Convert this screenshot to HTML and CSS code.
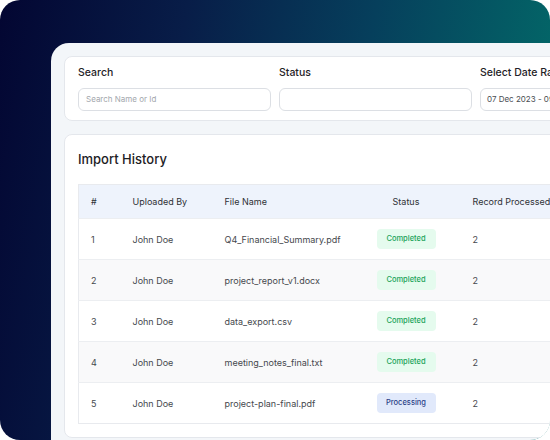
FILE: index.html
```html
<!DOCTYPE html>
<html lang="en">
<head>
<meta charset="utf-8">
<title>Import History</title>
<link rel="stylesheet" href="styles.css">
</head>
<body>
<div class="frame">
  <div class="panel">
    <div class="card filters">
      <div class="field">
        <label class="label">Search</label>
        <div class="input placeholder">Search Name or Id</div>
      </div>
      <div class="field">
        <label class="label">Status</label>
        <div class="input"></div>
      </div>
      <div class="field">
        <label class="label">Select Date Range</label>
        <div class="input value">07 Dec 2023 - 09 Dec 2023</div>
      </div>
    </div>
    <div class="card history">
      <h2 class="title">Import History</h2>
      <table class="table">
        <colgroup>
          <col class="c1"><col class="c2"><col class="c3"><col class="c4"><col class="c5"><col class="c6">
        </colgroup>
        <thead>
          <tr><th>#</th><th>Uploaded By</th><th>File Name</th><th class="center">Status</th><th class="num">Record Processed</th><th>Date</th></tr>
        </thead>
        <tbody>
          <tr><td>1</td><td>John Doe</td><td>Q4_Financial_Summary.pdf</td><td class="center"><span class="badge done">Completed</span></td><td class="num">2</td><td>07 Dec 2023</td></tr>
          <tr><td>2</td><td>John Doe</td><td>project_report_v1.docx</td><td class="center"><span class="badge done">Completed</span></td><td class="num">2</td><td>07 Dec 2023</td></tr>
          <tr><td>3</td><td>John Doe</td><td>data_export.csv</td><td class="center"><span class="badge done">Completed</span></td><td class="num">2</td><td>08 Dec 2023</td></tr>
          <tr><td>4</td><td>John Doe</td><td>meeting_notes_final.txt</td><td class="center"><span class="badge done">Completed</span></td><td class="num">2</td><td>08 Dec 2023</td></tr>
          <tr><td>5</td><td>John Doe</td><td>project-plan-final.pdf</td><td class="center"><span class="badge proc">Processing</span></td><td class="num">2</td><td>09 Dec 2023</td></tr>
        </tbody>
      </table>
    </div>
  </div>
</div>
</body>
</html>
```
FILE: styles.css
```css
html, body {
  margin: 0;
  padding: 0;
  background: #ffffff;
  overflow: hidden;
}
body {
  font-family: Inter, "Noto Sans", "Liberation Sans", sans-serif;
}
.frame {
  width: 550px;
  height: 440px;
  border-radius: 20px;
  overflow: hidden;
  background: linear-gradient(100deg, #030632 0%, #081d48 30%, #063f5c 60%, #02726b 100%);
  padding: 43px 0 0 51px;
  box-sizing: border-box;
}
.panel {
  width: 640px;
  height: 420px;
  background: #f3f6f9;
  border-radius: 18px 0 0 0;
  padding: 13px;
  box-sizing: border-box;
  display: flex;
  flex-direction: column;
  gap: 13px;
}
.card {
  background: #ffffff;
  border: 1px solid #e4e7ec;
  border-radius: 8px;
}
.filters {
  display: grid;
  grid-template-columns: 193px 193px 193px;
  column-gap: 8px;
  padding: 9px 14px 9px 13px;
}
.field {
  display: flex;
  flex-direction: column;
  gap: 9px;
}
.label {
  font-size: 10.5px;
  font-weight: 500;
  color: #1f2227;
  line-height: 13px;
  white-space: nowrap;
}
.input {
  height: 23px;
  box-sizing: border-box;
  border: 1px solid #dcdfe4;
  border-radius: 6px;
  padding: 0 8px 0 7px;
  font-size: 8px;
  line-height: 21px;
  white-space: nowrap;
  overflow: hidden;
}
.placeholder { color: #a3a7ad; }
.value { color: #4a4d52; padding-left: 6px; }
.history {
  padding: 0 13px 13px 13px;
}
.title {
  margin: 0;
  font-size: 13px;
  font-weight: 500;
  color: #1d2024;
  line-height: 16px;
  padding: 16px 0 17px 0;
}
.table {
  border-collapse: collapse;
  table-layout: fixed;
  width: 600px;
  border: 1px solid #e8eaee;
  font-size: 9px;
  color: #45484d;
}
.c1 { width: 42px; }
.c2 { width: 92px; }
.c3 { width: 141px; }
.c4 { width: 105px; }
.c5 { width: 130px; }
.c6 { width: 90px; }
th, td {
  text-align: left;
  padding: 0 0 0 12px;
  white-space: nowrap;
}
th.num, td.num {
  padding-left: 14px;
}
th {
  background: #eef3fc;
  height: 33px;
  font-weight: 400;
  color: #2e3136;
}
td {
  height: 40px;
  border-top: 1px solid #eceef1;
}
tbody tr:nth-child(even) td {
  background: #f9f9fa;
}
th.center, td.center {
  text-align: center;
  padding: 0;
}
.badge {
  display: inline-block;
  width: 59px;
  height: 20px;
  line-height: 20px;
  border-radius: 4px;
  font-size: 7.5px;
  font-weight: 500;
  text-align: center;
}
.done { background: #e5fbee; color: #21a35a; }
.proc { background: #e1e9fb; color: #2a3f87; }
```
